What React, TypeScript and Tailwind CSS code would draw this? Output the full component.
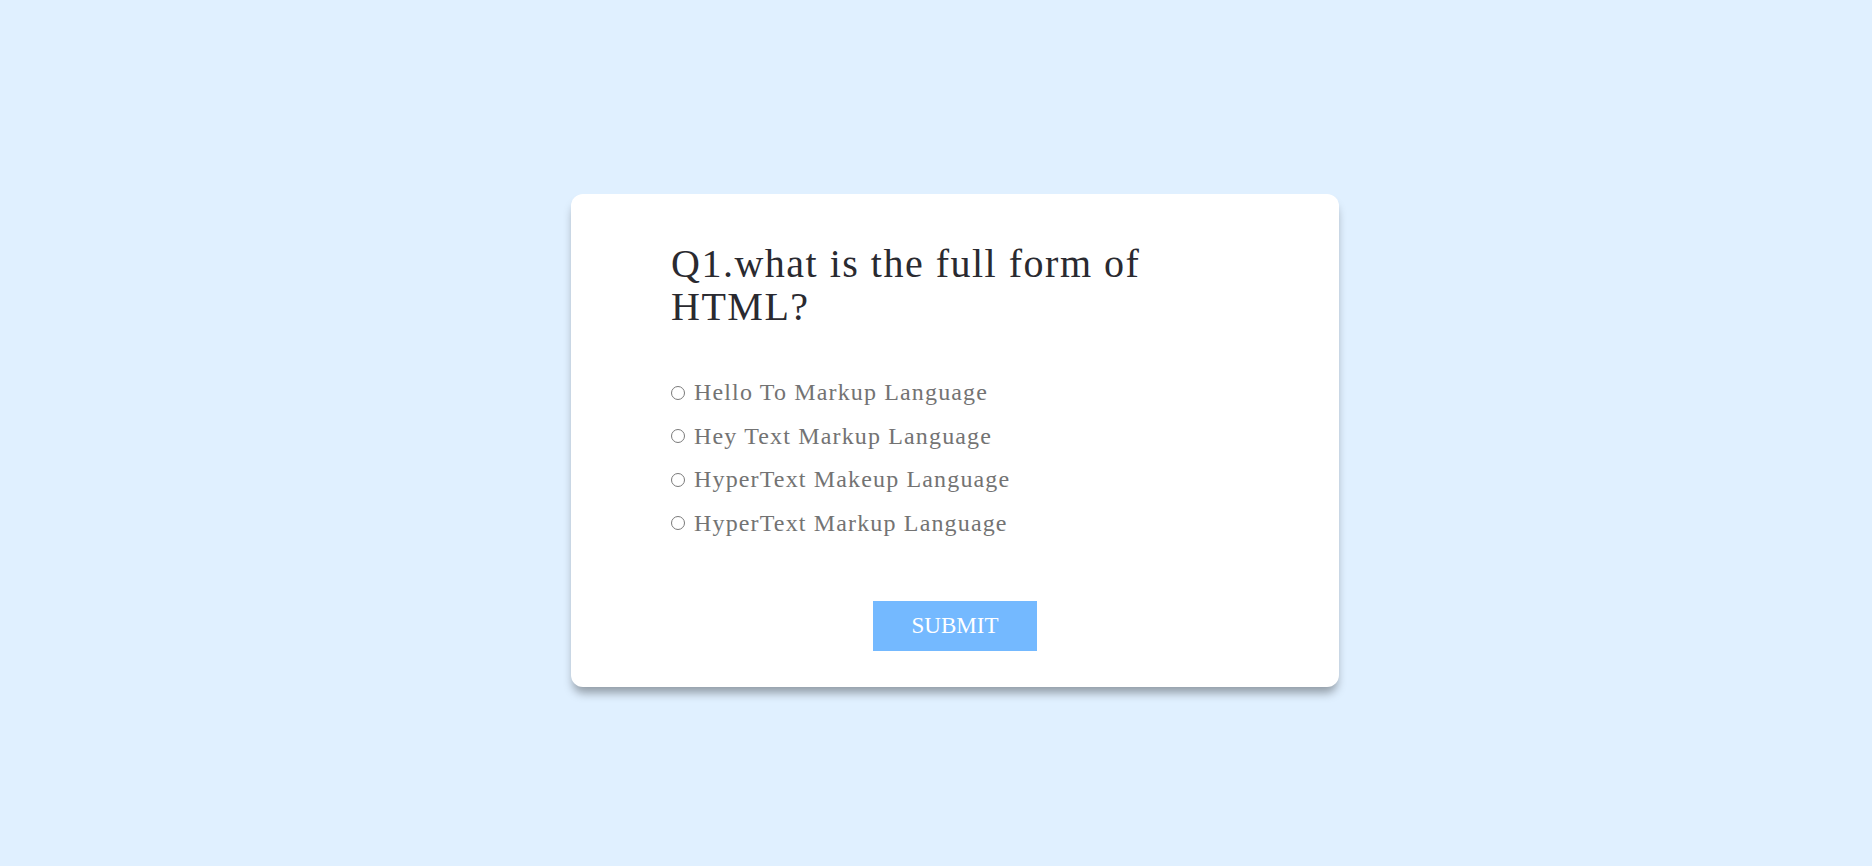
import React from 'react';

const options = [
    'Hello To Markup Language',
    'Hey Text Markup Language',
    'HyperText Makeup Language',
    'HyperText Markup Language',
];

const App = () => (
    <div className="min-h-screen w-full bg-[#e0f0ff] flex items-center justify-center pl-[38px] pt-[15px] font-['Liberation_Serif',serif]">
        <div className="w-[768px] h-[493px] bg-white rounded-xl shadow-[0_8px_10px_-2px_rgba(0,0,0,0.35)] px-[100px] pt-[48px] flex flex-col">
            <h2 className="text-[40px] leading-[43px] tracking-[1.5px] text-[#2a2a30] font-normal">
                Q1.what is the full form of
                <br />
                HTML?
            </h2>
            <ul className="mt-[43px] flex flex-col">
                {options.map((opt) => (
                    <li key={opt} className="h-[43.5px] flex items-center gap-[9px]">
                        <span className="w-[14px] h-[14px] rounded-full border-[1.5px] border-[#7a7a7a] shrink-0" />
                        <span className="text-[24px] leading-[43.5px] tracking-[1.15px] text-[#737373]">{opt}</span>
                    </li>
                ))}
            </ul>
            <div className="mt-[56px] flex justify-center">
                <button
                    type="button"
                    className="w-[164px] h-[50px] bg-[#74b9ff] text-white text-[23px] flex items-center justify-center"
                >
                    SUBMIT
                </button>
            </div>
        </div>
    </div>
);

export default App;
